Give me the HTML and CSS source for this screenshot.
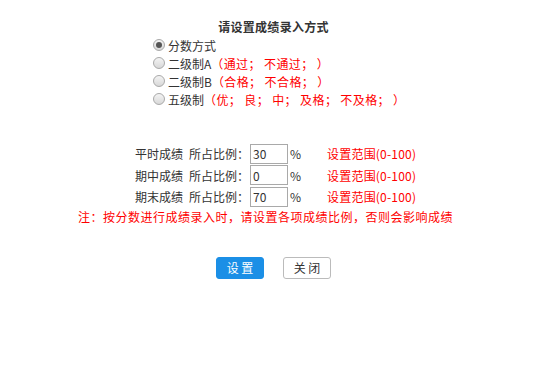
FILE: index.html
```html
<!DOCTYPE html>
<html lang="zh">
<head>
<meta charset="UTF-8">
<title>成绩录入方式</title>
<link rel="stylesheet" href="styles.css">
</head>
<body>
<div class="page">
  <div class="title">请设置成绩录入方式</div>

  <div class="options">
    <label class="opt"><input type="radio" name="mode" checked> 分数方式</label>
    <label class="opt"><input type="radio" name="mode"> 二级制A<span class="red">（通过； 不通过； ）</span></label>
    <label class="opt"><input type="radio" name="mode"> 二级制B<span class="red">（合格； 不合格； ）</span></label>
    <label class="opt"><input type="radio" name="mode"> 五级制<span class="red">（优； 良； 中； 及格； 不及格； ）</span></label>
  </div>

  <div class="ratios">
    <div class="row">
      <span class="name">平时成绩</span><span class="lbl">所占比例：</span><input class="num" type="text" value="30"><span class="pct">%</span><span class="red range">设置范围(0-100)</span>
    </div>
    <div class="row">
      <span class="name">期中成绩</span><span class="lbl">所占比例：</span><input class="num" type="text" value="0"><span class="pct">%</span><span class="red range">设置范围(0-100)</span>
    </div>
    <div class="row">
      <span class="name">期末成绩</span><span class="lbl">所占比例：</span><input class="num" type="text" value="70"><span class="pct">%</span><span class="red range">设置范围(0-100)</span>
    </div>
  </div>
  <div class="note red">注：按分数进行成绩录入时，请设置各项成绩比例，否则会影响成绩</div>

  <div class="actions">
    <button class="btn primary">设 置</button>
    <button class="btn">关 闭</button>
  </div>
</div>
</body>
</html>
```

FILE: styles.css
```css
body {
  margin: 0;
  font-family: "Noto Sans CJK SC", "Liberation Sans", sans-serif;
  font-size: 12px;
  color: #333;
  background: #fff;
}
.page {
  width: 537px;
  padding-top: 18px;
}
.red {
  color: #f00;
}
.title {
  text-align: center;
  padding-left: 10px;
  font-weight: bold;
  line-height: 18px;
  letter-spacing: 0.3px;
}
.options {
  padding-left: 153px;
}
.opt {
  display: flex;
  align-items: center;
  height: 18px;
}
.opt .red {
  letter-spacing: 0.4px;
}
.opt input {
  appearance: none;
  -webkit-appearance: none;
  width: 12px;
  height: 12px;
  margin: 0 3px 0 0;
  border: 1px solid #a9a9a9;
  border-radius: 50%;
  background: linear-gradient(#f4f4f4, #d8d8d8);
  box-sizing: border-box;
  position: relative;
}
.opt input:checked::after {
  content: "";
  position: absolute;
  left: 2px;
  top: 2px;
  width: 6px;
  height: 6px;
  border-radius: 50%;
  background: #555;
}
.ratios {
  margin-top: 35px;
}
.row {
  display: flex;
  align-items: center;
  height: 21.5px;
  padding-left: 135px;
}
.lbl {
  margin-left: 6px;
}
.num {
  width: 38px;
  height: 20px;
  box-sizing: border-box;
  border: 1px solid #a9a9a9;
  padding: 0 2px;
  font: inherit;
  color: #333;
  margin: 0 2px 0 1px;
}
.pct {
  width: 37px;
}
.range {
  letter-spacing: 0.2px;
}
.note {
  text-align: center;
  padding-right: 6px;
  line-height: 18px;
  letter-spacing: 0.5px;
}
.actions {
  display: flex;
  justify-content: center;
  gap: 19px;
  margin-top: 31px;
  padding-left: 10px;
}
.btn {
  width: 48px;
  height: 22px;
  box-sizing: border-box;
  border: 1px solid #bbb;
  border-radius: 3px;
  background: #fff;
  color: #333;
  font: inherit;
  font-size: 12px;
  padding: 0;
}
.btn.primary {
  background: #1b8fe6;
  border-color: #1b8fe6;
  color: #fff;
}
```
